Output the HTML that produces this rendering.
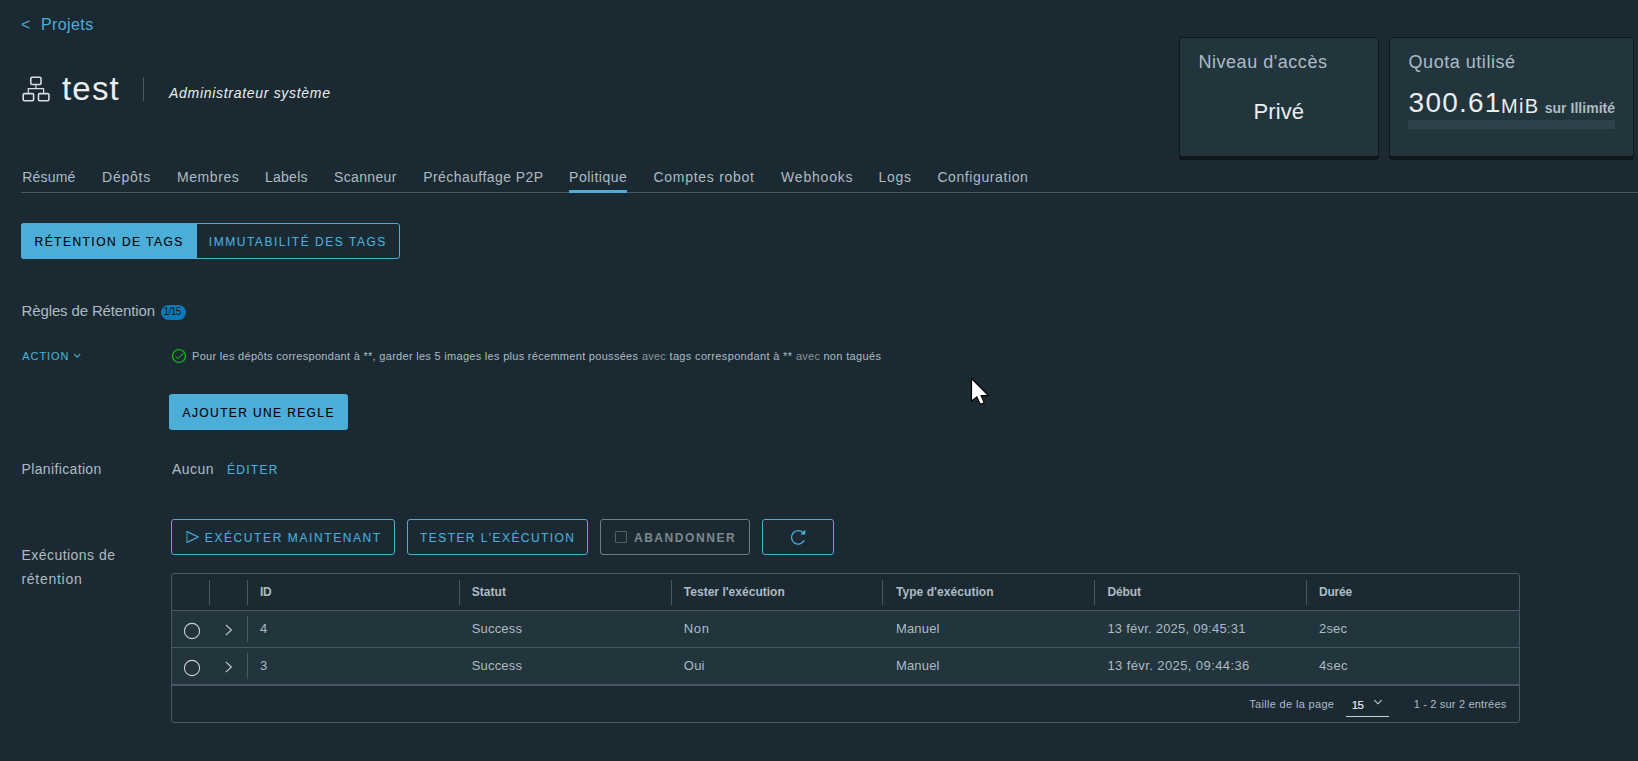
<!DOCTYPE html>
<html><head><meta charset="utf-8"><style>
html,body{margin:0;padding:0;}
body{width:1638px;height:761px;background:#1b2a32;position:relative;overflow:hidden;font-family:"Liberation Sans",sans-serif;}
.t{position:absolute;white-space:pre;line-height:1;}
.a{position:absolute;box-sizing:border-box;}
</style></head><body>
<!-- project icon -->
<svg class="a" style="left:0;top:0" width="200" height="120" viewBox="0 0 200 120">
 <g fill="none" stroke="#d8dde1" stroke-width="1.6">
  <rect x="30.8" y="77.3" width="10.2" height="7.2" rx="1.2"/>
  <rect x="23.2" y="93.6" width="10.4" height="7.2" rx="1.2"/>
  <rect x="38.5" y="93.6" width="10.4" height="7.2" rx="1.2"/>
  <path d="M35.9 84.5V88.6M28.3 93.2V88.6H43.6V93.2" stroke-width="1.2"/>
 </g>
 <rect x="143" y="77" width="1" height="24" fill="#485764"/>
</svg>
<!-- cards -->
<div class="a" style="left:1179px;top:37px;width:200px;height:120px;background:#22343c;border:1px solid #0f181d;border-radius:3px;box-shadow:0 3px 0 #0f171b;"></div>
<div class="a" style="left:1389px;top:37px;width:245px;height:120px;background:#22343c;border:1px solid #0f181d;border-radius:3px;box-shadow:0 3px 0 #0f171b;"></div>
<div class="a" style="left:1408px;top:120px;width:207px;height:9px;background:#2f424c;"></div>
<!-- tabs line -->
<div class="a" style="left:21px;top:192px;width:1617px;height:1px;background:#485764;"></div>
<div class="a" style="left:569px;top:190px;width:58px;height:3px;background:#4aaed9;"></div>
<!-- button group -->
<div class="a" style="left:21px;top:223px;width:379px;height:36px;border:1px solid #4aaed9;border-radius:3px;"></div>
<div class="a" style="left:21px;top:223px;width:176px;height:36px;background:#4aaed9;border-radius:3px 0 0 3px;"></div>
<!-- badge -->
<div class="a" style="left:161px;top:305px;width:25px;height:15px;background:#0b7ab6;border-radius:8px;"></div>
<!-- action chevron -->
<svg class="a" style="left:73px;top:352px" width="9" height="8" viewBox="0 0 9 8"><path d="M1.2 2.2L4.2 5.2L7.2 2.2" fill="none" stroke="#4aaed9" stroke-width="1.2"/></svg>
<!-- green check -->
<svg class="a" style="left:170px;top:347px" width="18" height="18" viewBox="0 0 18 18"><circle cx="9.05" cy="9" r="6.5" fill="none" stroke="#14c414" stroke-width="1.2"/><path d="M5.6 9.4L7.9 11.5L13.8 6.2" fill="none" stroke="#14c414" stroke-width="1.0"/></svg>
<!-- add rule button -->
<div class="a" style="left:169px;top:394px;width:179px;height:36px;background:#4aaed9;border-radius:3px;"></div>
<!-- action buttons -->
<div class="a" style="left:171px;top:519px;width:224px;height:36px;border:1px solid #4aaed9;border-radius:3px;"></div>
<svg class="a" style="left:184px;top:529px" width="18" height="16" viewBox="0 0 18 16"><path d="M3 2.6L14.4 8L3 13.4" fill="none" stroke="#4aaed9" stroke-width="1.2" stroke-linejoin="round" stroke-linecap="round"/><path d="M3 2.6V13.4" stroke="#3f8fb3" stroke-width="1.2"/></svg>
<div class="a" style="left:407px;top:519px;width:181px;height:36px;border:1px solid #4aaed9;border-radius:3px;"></div>
<div class="a" style="left:600px;top:519px;width:150px;height:36px;border:1px solid #737b80;border-radius:3px;"></div>
<div class="a" style="left:615px;top:531px;width:12px;height:12px;border:1px solid #535e65;border-radius:1px;"></div>
<div class="a" style="left:762px;top:519px;width:72px;height:36px;border:1px solid #4aaed9;border-radius:3px;"></div>
<svg class="a" style="left:788px;top:527px" width="20" height="20" viewBox="0 0 20 20"><path d="M15.2 5.9A6.7 6.7 0 1 0 16.2 13.4" fill="none" stroke="#4aaed9" stroke-width="1.3"/><path d="M17.2 2.6L17.2 7.5L12.4 7.5Z" fill="#4aaed9"/></svg>
<!-- table -->
<div class="a" style="left:171px;top:573px;width:1349px;height:150px;border:1px solid #485764;border-radius:3px;background:#1b2a32;"></div>
<div class="a" style="left:172px;top:610px;width:1347px;height:1px;background:#485764;"></div>
<div class="a" style="left:172px;top:611px;width:1347px;height:36px;background:#22343c;"></div>
<div class="a" style="left:172px;top:647px;width:1347px;height:1px;background:#485764;"></div>
<div class="a" style="left:172px;top:648px;width:1347px;height:36px;background:#22343c;"></div>
<div class="a" style="left:172px;top:684px;width:1347px;height:2px;background:#485764;"></div>
<!-- header separators -->
<div class="a" style="left:209px;top:580px;width:1px;height:25px;background:#485764;"></div>
<div class="a" style="left:247px;top:580px;width:1px;height:25px;background:#485764;"></div>
<div class="a" style="left:459px;top:580px;width:1px;height:25px;background:#485764;"></div>
<div class="a" style="left:671px;top:580px;width:1px;height:25px;background:#485764;"></div>
<div class="a" style="left:882px;top:580px;width:1px;height:25px;background:#485764;"></div>
<div class="a" style="left:1094px;top:580px;width:1px;height:25px;background:#485764;"></div>
<div class="a" style="left:1306px;top:580px;width:1px;height:25px;background:#485764;"></div>
<!-- row separators -->
<div class="a" style="left:247px;top:616px;width:1px;height:26px;background:#485764;"></div>
<div class="a" style="left:247px;top:653px;width:1px;height:26px;background:#485764;"></div>
<!-- radios & chevrons -->
<svg class="a" style="left:170px;top:610px" width="80" height="75" viewBox="0 0 80 75">
 <g fill="none" stroke="#c9d1d6" stroke-width="1.1">
  <circle cx="22" cy="21" r="7.6"/>
  <circle cx="22" cy="58" r="7.6"/>
  <path d="M55.8 14.8L61.4 20L55.8 25.2"/>
  <path d="M55.8 51.8L61.4 57L55.8 62.2"/>
 </g>
</svg>
<!-- footer select -->
<svg class="a" style="left:1372px;top:697px" width="12" height="10" viewBox="0 0 12 10"><path d="M2.3 3.2L6 6.8L9.7 3.2" fill="none" stroke="#c9d1d6" stroke-width="1.1"/></svg>
<div class="a" style="left:1346px;top:716px;width:43px;height:1px;background:#c9d1d6;"></div>
<!-- cursor -->
<svg class="a" style="left:969px;top:376px" width="24" height="32" viewBox="0 0 24 32"><path d="M2.5 2.5V25.3L7.8 20.9L11.3 28.3L15.2 26.9L12.1 19.6H19.4Z" fill="#fff" stroke="#000" stroke-width="1.15" stroke-linejoin="miter"/></svg>

<span class="t" id="t0" style="left:21.00px;top:17.06px;font-size:16px;color:#4aaed9;font-weight:400;font-style:normal;letter-spacing:-0.844px;">&lt;</span>
<span class="t" id="t1" style="left:41.00px;top:17.26px;font-size:16px;color:#4aaed9;font-weight:400;font-style:normal;letter-spacing:0.400px;">Projets</span>
<span class="t" id="t2" style="left:62.00px;top:71.87px;font-size:33px;color:#eaedf0;font-weight:400;font-style:normal;letter-spacing:1.199px;">test</span>
<span class="t" id="t3" style="left:169.00px;top:85.75px;font-size:14px;color:#eaedf0;font-weight:400;font-style:italic;letter-spacing:0.701px;">Administrateur système</span>
<span class="t" id="t4" style="left:1198.40px;top:52.56px;font-size:18px;color:#adbbc4;font-weight:400;font-style:normal;letter-spacing:0.545px;">Niveau d'accès</span>
<span class="t" id="t5" style="left:1253.40px;top:100.78px;font-size:22px;color:#eaedf0;font-weight:400;font-style:normal;letter-spacing:0.119px;">Privé</span>
<span class="t" id="t6" style="left:1408.60px;top:52.76px;font-size:18px;color:#adbbc4;font-weight:400;font-style:normal;letter-spacing:0.529px;">Quota utilisé</span>
<span class="t" id="t7" style="left:1408.60px;top:88.80px;font-size:28px;color:#eaedf0;font-weight:400;font-style:normal;letter-spacing:1.210px;">300.61</span>
<span class="t" id="t8" style="left:1501.00px;top:95.57px;font-size:20px;color:#eaedf0;font-weight:400;font-style:normal;letter-spacing:1.272px;">MiB</span>
<span class="t" id="t9" style="left:1544.70px;top:100.65px;font-size:14px;color:#adbbc4;font-weight:700;font-style:normal;letter-spacing:0.034px;">sur Illimité</span>
<span class="t" id="t10" style="left:22.30px;top:170.15px;font-size:14px;color:#adbbc4;font-weight:400;font-style:normal;letter-spacing:0.191px;">Résumé</span>
<span class="t" id="t11" style="left:102.00px;top:170.15px;font-size:14px;color:#adbbc4;font-weight:400;font-style:normal;letter-spacing:0.768px;">Dépôts</span>
<span class="t" id="t12" style="left:177.00px;top:170.15px;font-size:14px;color:#adbbc4;font-weight:400;font-style:normal;letter-spacing:0.575px;">Membres</span>
<span class="t" id="t13" style="left:265.00px;top:170.15px;font-size:14px;color:#adbbc4;font-weight:400;font-style:normal;letter-spacing:0.248px;">Labels</span>
<span class="t" id="t14" style="left:334.10px;top:170.15px;font-size:14px;color:#adbbc4;font-weight:400;font-style:normal;letter-spacing:0.338px;">Scanneur</span>
<span class="t" id="t15" style="left:423.20px;top:170.15px;font-size:14px;color:#adbbc4;font-weight:400;font-style:normal;letter-spacing:0.434px;">Préchauffage P2P</span>
<span class="t" id="t16" style="left:569.10px;top:170.15px;font-size:14px;color:#adbbc4;font-weight:400;font-style:normal;letter-spacing:0.500px;">Politique</span>
<span class="t" id="t17" style="left:653.40px;top:170.15px;font-size:14px;color:#adbbc4;font-weight:400;font-style:normal;letter-spacing:0.731px;">Comptes robot</span>
<span class="t" id="t18" style="left:781.10px;top:170.15px;font-size:14px;color:#adbbc4;font-weight:400;font-style:normal;letter-spacing:0.787px;">Webhooks</span>
<span class="t" id="t19" style="left:878.60px;top:170.15px;font-size:14px;color:#adbbc4;font-weight:400;font-style:normal;letter-spacing:0.679px;">Logs</span>
<span class="t" id="t20" style="left:937.40px;top:170.15px;font-size:14px;color:#adbbc4;font-weight:400;font-style:normal;letter-spacing:0.594px;">Configuration</span>
<span class="t" id="t21" style="-webkit-text-stroke:0.12px #000;left:34.50px;top:235.74px;font-size:12px;color:#000;font-weight:500;font-style:normal;letter-spacing:1.472px;">RÉTENTION DE TAGS</span>
<span class="t" id="t22" style="-webkit-text-stroke:0.12px #4aaed9;left:208.80px;top:235.74px;font-size:12px;color:#4aaed9;font-weight:500;font-style:normal;letter-spacing:1.528px;">IMMUTABILITÉ DES TAGS</span>
<span class="t" id="t23" style="left:21.60px;top:303.20px;font-size:15px;color:#adbbc4;font-weight:400;font-style:normal;letter-spacing:-0.140px;">Règles de Rétention</span>
<span class="t" id="t24" style="left:163.60px;top:306.84px;font-size:10px;color:#0b1a22;font-weight:400;font-style:normal;letter-spacing:0.000px;letter-spacing:-0.6px;">1/15</span>
<span class="t" id="t25" style="-webkit-text-stroke:0.12px #4aaed9;left:22.30px;top:350.59px;font-size:11px;color:#4aaed9;font-weight:500;font-style:normal;letter-spacing:0.907px;">ACTION</span>
<span class="t" id="t26" style="left:192.00px;top:350.69px;font-size:11px;color:#adbbc4;font-weight:400;font-style:normal;letter-spacing:0.294px;">Pour les dépôts correspondant à **, garder les 5 images les plus récemment poussées</span>
<span class="t" id="t27" style="left:642.00px;top:350.69px;font-size:11px;color:#8b9399;font-weight:400;font-style:normal;letter-spacing:0.152px;">avec</span>
<span class="t" id="t28" style="left:669.50px;top:350.69px;font-size:11px;color:#adbbc4;font-weight:400;font-style:normal;letter-spacing:0.342px;">tags correspondant à **</span>
<span class="t" id="t29" style="left:796.00px;top:350.69px;font-size:11px;color:#8b9399;font-weight:400;font-style:normal;letter-spacing:0.250px;">avec</span>
<span class="t" id="t30" style="left:823.40px;top:350.69px;font-size:11px;color:#adbbc4;font-weight:400;font-style:normal;letter-spacing:0.351px;">non tagués</span>
<span class="t" id="t31" style="-webkit-text-stroke:0.12px #000;left:182.60px;top:407.24px;font-size:12px;color:#000;font-weight:500;font-style:normal;letter-spacing:1.382px;">AJOUTER UNE REGLE</span>
<span class="t" id="t32" style="left:21.50px;top:462.25px;font-size:14px;color:#adbbc4;font-weight:400;font-style:normal;letter-spacing:0.358px;">Planification</span>
<span class="t" id="t33" style="left:171.90px;top:462.25px;font-size:14px;color:#adbbc4;font-weight:400;font-style:normal;letter-spacing:0.500px;">Aucun</span>
<span class="t" id="t34" style="-webkit-text-stroke:0.12px #4aaed9;left:227.00px;top:463.64px;font-size:12px;color:#4aaed9;font-weight:500;font-style:normal;letter-spacing:1.278px;">ÉDITER</span>
<span class="t" id="t35" style="left:21.40px;top:547.95px;font-size:14px;color:#adbbc4;font-weight:400;font-style:normal;letter-spacing:0.470px;">Exécutions de</span>
<span class="t" id="t36" style="left:21.40px;top:571.95px;font-size:14px;color:#adbbc4;font-weight:400;font-style:normal;letter-spacing:0.726px;">rétention</span>
<span class="t" id="t37" style="-webkit-text-stroke:0.12px #4aaed9;left:204.80px;top:531.94px;font-size:12px;color:#4aaed9;font-weight:500;font-style:normal;letter-spacing:1.596px;">EXÉCUTER MAINTENANT</span>
<span class="t" id="t38" style="-webkit-text-stroke:0.12px #4aaed9;left:420.00px;top:531.94px;font-size:12px;color:#4aaed9;font-weight:500;font-style:normal;letter-spacing:1.433px;">TESTER L'EXÉCUTION</span>
<span class="t" id="t39" style="left:633.90px;top:531.94px;font-size:12px;color:#7d878e;font-weight:700;font-style:normal;letter-spacing:1.569px;">ABANDONNER</span>
<span class="t" id="t40" style="left:260.00px;top:586.44px;font-size:12px;color:#adbbc4;font-weight:700;font-style:normal;letter-spacing:-0.308px;">ID</span>
<span class="t" id="t41" style="left:471.70px;top:586.44px;font-size:12px;color:#adbbc4;font-weight:700;font-style:normal;letter-spacing:0.060px;">Statut</span>
<span class="t" id="t42" style="left:683.80px;top:586.44px;font-size:12px;color:#adbbc4;font-weight:700;font-style:normal;letter-spacing:0.019px;">Tester l'exécution</span>
<span class="t" id="t43" style="left:895.90px;top:586.44px;font-size:12px;color:#adbbc4;font-weight:700;font-style:normal;letter-spacing:0.069px;">Type d'exécution</span>
<span class="t" id="t44" style="left:1107.40px;top:586.44px;font-size:12px;color:#adbbc4;font-weight:700;font-style:normal;letter-spacing:-0.100px;">Début</span>
<span class="t" id="t45" style="left:1319.00px;top:586.44px;font-size:12px;color:#adbbc4;font-weight:700;font-style:normal;letter-spacing:-0.205px;">Durée</span>
<span class="t" id="t46" style="left:260.00px;top:622.40px;font-size:13px;color:#adbbc4;font-weight:400;font-style:normal;letter-spacing:0.000px;">4</span>
<span class="t" id="t47" style="left:471.70px;top:622.40px;font-size:13px;color:#adbbc4;font-weight:400;font-style:normal;letter-spacing:0.194px;">Success</span>
<span class="t" id="t48" style="left:683.80px;top:622.40px;font-size:13px;color:#adbbc4;font-weight:400;font-style:normal;letter-spacing:0.675px;">Non</span>
<span class="t" id="t49" style="left:895.90px;top:622.40px;font-size:13px;color:#adbbc4;font-weight:400;font-style:normal;letter-spacing:0.191px;">Manuel</span>
<span class="t" id="t50" style="left:1107.40px;top:622.40px;font-size:13px;color:#adbbc4;font-weight:400;font-style:normal;letter-spacing:0.227px;">13 févr. 2025, 09:45:31</span>
<span class="t" id="t51" style="left:1319.00px;top:622.40px;font-size:13px;color:#adbbc4;font-weight:400;font-style:normal;letter-spacing:0.179px;">2sec</span>
<span class="t" id="t52" style="left:260.00px;top:659.20px;font-size:13px;color:#adbbc4;font-weight:400;font-style:normal;letter-spacing:0.000px;">3</span>
<span class="t" id="t53" style="left:471.70px;top:659.20px;font-size:13px;color:#adbbc4;font-weight:400;font-style:normal;letter-spacing:0.194px;">Success</span>
<span class="t" id="t54" style="left:683.80px;top:659.20px;font-size:13px;color:#adbbc4;font-weight:400;font-style:normal;letter-spacing:0.231px;">Oui</span>
<span class="t" id="t55" style="left:895.90px;top:659.20px;font-size:13px;color:#adbbc4;font-weight:400;font-style:normal;letter-spacing:0.191px;">Manuel</span>
<span class="t" id="t56" style="left:1107.40px;top:659.20px;font-size:13px;color:#adbbc4;font-weight:400;font-style:normal;letter-spacing:0.405px;">13 févr. 2025, 09:44:36</span>
<span class="t" id="t57" style="left:1319.00px;top:659.20px;font-size:13px;color:#adbbc4;font-weight:400;font-style:normal;letter-spacing:0.344px;">4sec</span>
<span class="t" id="t58" style="left:1249.20px;top:699.09px;font-size:11px;color:#adbbc4;font-weight:400;font-style:normal;letter-spacing:0.330px;">Taille de la page</span>
<span class="t" id="t59" style="left:1351.80px;top:699.57px;font-size:11.5px;color:#eaedf0;font-weight:400;font-style:normal;letter-spacing:0.000px;-webkit-text-stroke:0.15px #eaedf0;letter-spacing:-0.8px;">15</span>
<span class="t" id="t60" style="left:1413.70px;top:699.09px;font-size:11px;color:#adbbc4;font-weight:400;font-style:normal;letter-spacing:0.179px;">1 - 2 sur 2 entrées</span>
</body></html>
